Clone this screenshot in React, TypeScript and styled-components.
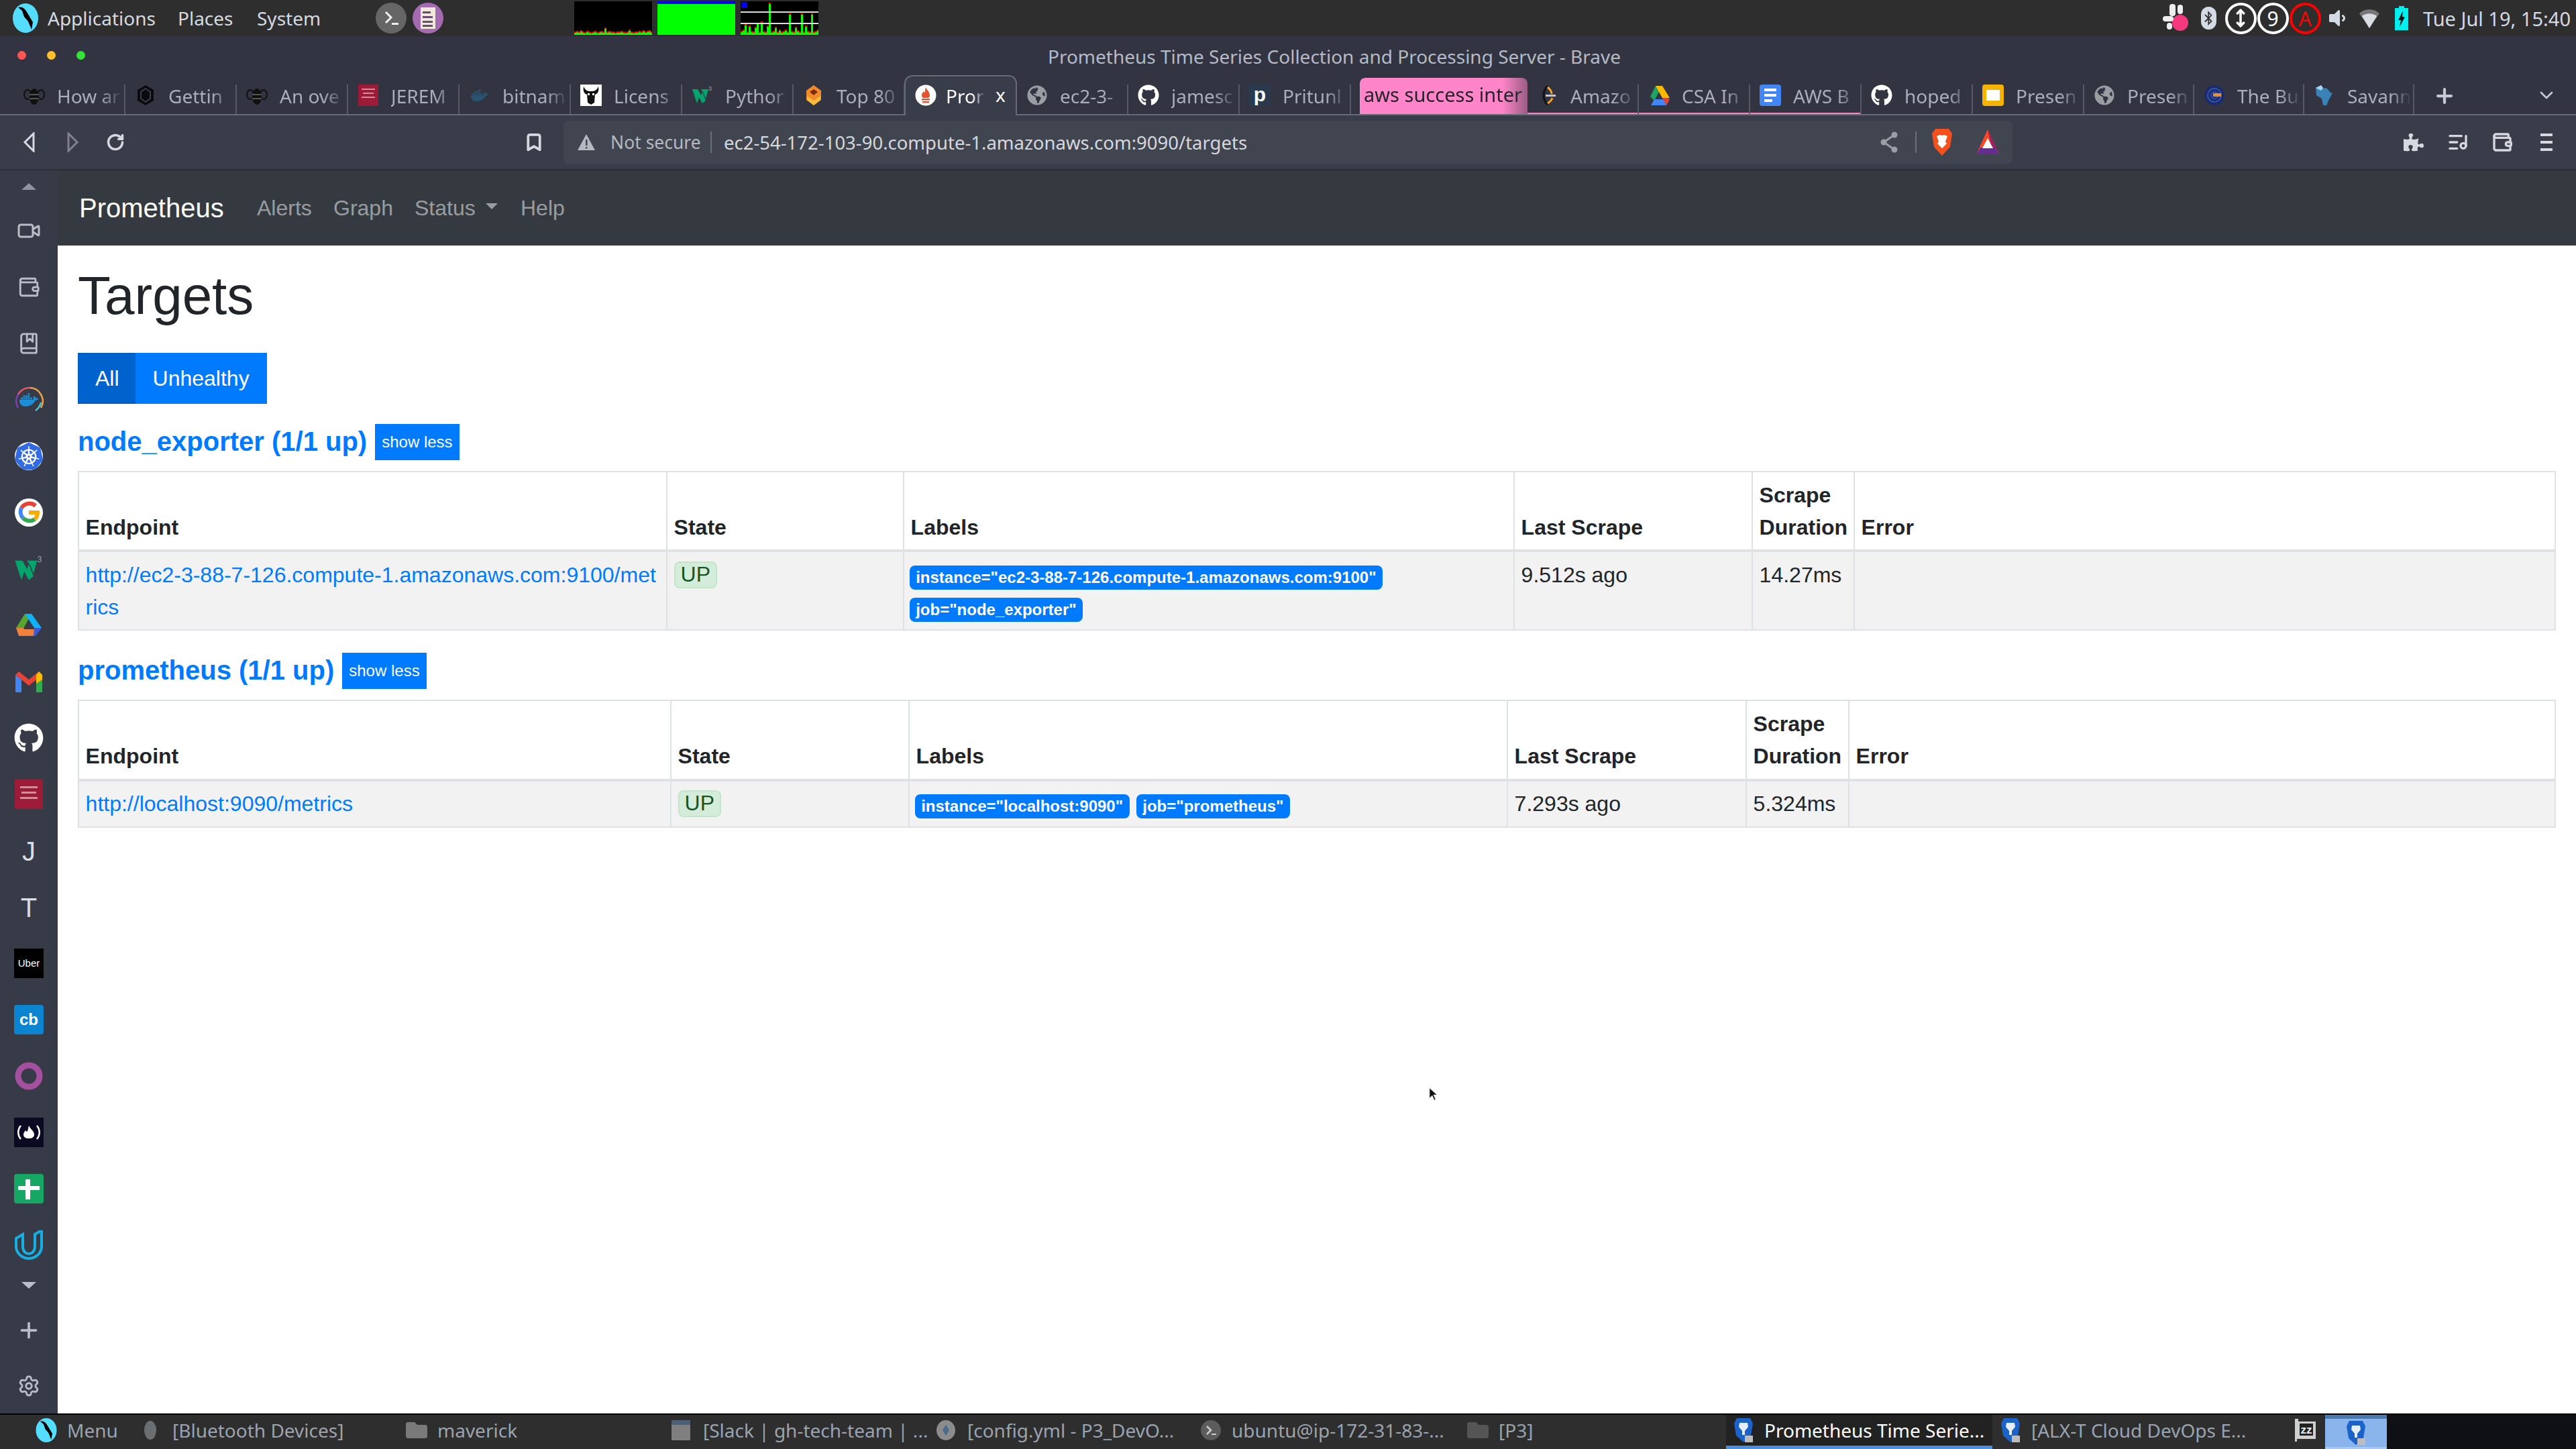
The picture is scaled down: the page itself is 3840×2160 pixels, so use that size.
import React from 'react'
import styled, { createGlobalStyle } from 'styled-components'
import { Video, Wallet, BookMarked, Settings, Plus, RotateCw, Bookmark, ListMusic, MoveVertical, ChevronDown } from 'lucide-react'
import { FaGithub, FaGlobeAmericas, FaPuzzlePiece, FaBluetoothB, FaVolumeDown, FaDocker, FaFolder } from 'react-icons/fa'
import { SiKubernetes } from 'react-icons/si'

const GlobalStyle = createGlobalStyle`
  html, body { margin: 0; padding: 0; background: #fff; }
  * { box-sizing: border-box; }
`

const Screen = styled.div`
  width: 3840px;
  height: 2160px;
  display: flex;
  flex-direction: column;
  overflow: hidden;
  font-family: "Noto Sans", sans-serif;
`

/* gnome panel */
const TopPanel = styled.div`
  height: 54px;
  flex: none;
  background: #2e2e2e;
  display: flex;
  align-items: center;
  padding-left: 16px;
  color: #d5dae2;
  font-size: 28px;
`
const PanelMenu = styled.div<{ $w: number; $ml?: number }>`
  width: ${p => p.$w}px;
  margin-left: ${p => p.$ml ?? 0}px;
  flex: none;
`
const Launcher = styled.div<{ $bg: string; $ml: number }>`
  width: 46px;
  height: 46px;
  border-radius: 50%;
  background: ${p => p.$bg};
  margin-left: ${p => p.$ml}px;
  display: flex;
  align-items: center;
  justify-content: center;
  flex: none;
`
const Graphs = styled.div`
  display: flex;
  gap: 8px;
  margin-left: 195px;
`
const Tray = styled.div`
  margin-left: auto;
  display: flex;
  align-items: center;
`
const TrayCell = styled.div`
  width: 48px;
  height: 54px;
  display: flex;
  align-items: center;
  justify-content: center;
`
const TrayCircle = styled.div<{ $c: string }>`
  width: 47px;
  height: 47px;
  border-radius: 50%;
  border: 4px solid ${p => p.$c};
  color: ${p => p.$c};
  display: flex;
  align-items: center;
  justify-content: center;
  font-size: 30px;
`
const BtPill = styled.div`
  width: 23px;
  height: 34px;
  border-radius: 12px;
  background: #d5dbe5;
  display: flex;
  align-items: center;
  justify-content: center;
`
const Clock = styled.div`
  width: 228px;
  margin-left: 8px;
  font-size: 29px;
  white-space: nowrap;
`

/* browser chrome */
const TitleBar = styled.div`
  height: 54px;
  flex: none;
  background: #323541;
  display: flex;
  align-items: center;
  justify-content: center;
  color: #b4bac6;
  font-size: 28px;
  padding: 6px 0 0 138px;
`
const Lights = styled.div`
  position: absolute;
  left: 26px;
  top: 76px;
  display: flex;
  gap: 31px;
`
const Light = styled.div<{ $c: string }>`
  width: 13px;
  height: 13px;
  border-radius: 50%;
  background: ${p => p.$c};
`
const TabStrip = styled.div`
  height: 64px;
  flex: none;
  background: #323541;
  border-bottom: 2px solid #666a72;
  display: flex;
  align-items: flex-end;
  padding-left: 21px;
  color: #a9aeb9;
  font-size: 28px;
`
const Tab = styled.div<{ $grouped?: boolean; $w?: number }>`
  width: ${p => p.$w ?? 166}px;
  height: 44px;
  flex: none;
  display: flex;
  gap: 18px;
  padding-left: 14px;
  border-right: 2px solid #555963;
  ${p => p.$grouped ? 'box-shadow: inset 0 -2px 0 #ff85c8;' : ''}
`
const ActiveTab = styled.div`
  width: 168px;
  height: 60px;
  flex: none;
  margin: 0 0 -2px -1px;
  background: #393c49;
  border: 2px solid #666a72;
  border-bottom: none;
  border-radius: 12px 12px 0 0;
  display: flex;
  gap: 14px;
  padding: 12px 0 0 14px;
  color: #fff;
`
const TabLabel = styled.div`
  flex: 1;
  min-width: 0;
  height: 40px;
  line-height: 34px;
  white-space: nowrap;
  -webkit-mask-image: linear-gradient(to right, #000 65%, transparent 98%);
`
const TabClose = styled.div`
  width: 30px;
  font-size: 28px;
  line-height: 30px;
`
const Favicon = styled.div`
  width: 32px;
  height: 32px;
  flex: none;
  display: flex;
  align-items: center;
  justify-content: center;
`
const GroupChip = styled.div`
  width: 250px;
  height: 54px;
  flex: none;
  margin-left: 13px;
  background: #ff85c8;
  border-radius: 8px 8px 0 0;
  color: #23242c;
  font-size: 29px;
  line-height: 50px;
  padding-left: 6px;
  white-space: nowrap;
  -webkit-mask-image: linear-gradient(to right, #000 85%, rgba(0, 0, 0, .5) 100%);
`
const NewTab = styled.div`
  width: 90px;
  height: 44px;
  display: flex;
  justify-content: center;
  align-items: flex-start;
  color: #c5c9d2;
`
const TabMenu = styled.div`
  margin-left: 91px;
  height: 44px;
  color: #c5c9d2;
`
const Toolbar = styled.div`
  height: 82px;
  flex: none;
  background: #393c49;
  border-bottom: 2px solid #2b2e38;
  display: flex;
  align-items: center;
  padding: 0 11px 0 12px;
  color: #d5d8de;
`
const ToolCell = styled.div<{ $w?: number; $ml?: number; $dim?: boolean }>`
  width: ${p => p.$w ?? 64}px;
  height: 64px;
  flex: none;
  margin-left: ${p => p.$ml ?? 0}px;
  display: flex;
  align-items: center;
  justify-content: center;
  opacity: ${p => p.$dim ? 0.45 : 1};
`
const AddressBar = styled.div`
  width: 2160px;
  height: 64px;
  flex: none;
  margin-left: 12px;
  background: #414550;
  border-radius: 8px;
  display: flex;
  align-items: center;
  font-size: 27px;
  padding-left: 20px;
`
const NotSecure = styled.div`
  width: 149px;
  margin-left: 22px;
  color: #b4b8c0;
  font-size: 26.5px;
  white-space: nowrap;
`
const AddressSep = styled.div<{ $ml?: number }>`
  width: 2px;
  height: 32px;
  background: #6b6f79;
  margin-left: ${p => p.$ml ?? 0}px;
  flex: none;
`
const Url = styled.div`
  width: 1723px;
  margin-left: 18px;
  color: #d5d8de;
  font-size: 27.5px;
  white-space: nowrap;
`
const ToolRight = styled.div`
  margin-left: auto;
  display: flex;
`

/* page area */
const Body = styled.div`
  flex: 1;
  min-height: 0;
  display: flex;
`
const Rail = styled.div`
  width: 86px;
  flex: none;
  background: #373a47;
  display: flex;
  flex-direction: column;
  align-items: center;
`
const RailSlot = styled.div<{ $h?: number }>`
  height: ${p => p.$h ?? 84}px;
  width: 44px;
  flex: none;
  display: flex;
  align-items: center;
  justify-content: center;
  color: #b9bdc7;
`
const Page = styled.div`
  flex: 1;
  min-width: 0;
  position: relative;
  background: #fff;
  font-family: "Liberation Sans", Arial, sans-serif;
  font-size: 32px;
  line-height: 48px;
  color: #212529;
`
const Navbar = styled.div`
  height: 112px;
  background: #343a40;
  display: flex;
  align-items: center;
  padding-left: 32px;
`
const Brand = styled.div`
  font-size: 40px;
  color: #fff;
  width: 265px;
  padding-bottom: 1px;
`
const NavLink = styled.div<{ $w: number }>`
  width: ${p => p.$w}px;
  color: rgba(255, 255, 255, .5);
  display: flex;
  align-items: center;
  flex: none;
`
const Caret = styled.span`
  width: 0;
  height: 0;
  margin: 0 0 5px 15px;
  border-top: 9.6px solid rgba(255, 255, 255, .5);
  border-left: 9.6px solid transparent;
  border-right: 9.6px solid transparent;
`
const Container = styled.div`
  padding: 27px 30px 0;
`
const Title = styled.h1`
  margin: 0 0 37px;
  font-size: 80px;
  font-weight: 500;
  line-height: 96px;
`
const FilterGroup = styled.div`
  display: flex;
  margin-bottom: 30px;
`
const FilterButton = styled.div<{ $active?: boolean }>`
  height: 76px;
  padding: 12px 24px;
  margin-left: ${p => p.$active ? 0 : -2}px;
  border: 2px solid ${p => p.$active ? '#005cbf' : '#007bff'};
  background: ${p => p.$active ? '#0062cc' : '#007bff'};
  color: #fff;
`
const JobHeading = styled.div`
  height: 54px;
  margin-bottom: 16px;
  display: flex;
  align-items: center;
  gap: 12px;
`
const JobLink = styled.h5`
  margin: 0;
  padding-bottom: 3px;
  font-size: 40px;
  font-weight: 700;
  line-height: 48px;
  color: #007bff;
`
const ShowLess = styled.div`
  height: 54px;
  padding: 7px 8px;
  border: 2px solid #007bff;
  background: #007bff;
  color: #fff;
  font-size: 24px;
  line-height: 36px;
`
const Table = styled.table`
  width: 100%;
  table-layout: fixed;
  border-collapse: collapse;
  margin-bottom: 33px;
`
const Col = styled.col<{ $w?: number }>`
  ${p => p.$w ? `width: ${p.$w}px;` : ''}
`
const Th = styled.th`
  border: 2px solid #dee2e6;
  border-bottom-width: 4px;
  padding: 9.6px;
  text-align: left;
  vertical-align: bottom;
  font-weight: 700;
`
const Td = styled.td`
  border: 2px solid #dee2e6;
  padding: 9.6px;
  vertical-align: top;
  background: #f2f2f2;
`
const EndpointLink = styled.a`
  color: #007bff;
  word-break: break-all;
`
const UpBadge = styled.div`
  display: inline-block;
  height: 40px;
  padding: 0 8px;
  margin-top: 4px;
  background: #d4edda;
  border: 2px solid #c3e6cb;
  border-radius: 8px;
  color: #155724;
  line-height: 34px;
  vertical-align: top;
`
const LabelRow = styled.div`
  display: flex;
  flex-wrap: wrap;
  gap: 12px 10px;
  padding: 10px 0 2px;
  margin-left: -2px;
`
const Label = styled.span`
  height: 36px;
  padding: 6px 9.6px;
  background: #007bff;
  border-radius: 8px;
  color: #fff;
  font-size: 24px;
  font-weight: 700;
  line-height: 24px;
  white-space: nowrap;
`
const Pointer = styled.svg`
  position: absolute;
  left: 2044px;
  top: 1367px;
`

/* bottom panel */
const BottomPanel = styled.div`
  height: 53px;
  flex: none;
  background: #2e2e2e;
  border-top: 2px solid #000;
  display: flex;
  align-items: stretch;
  padding-left: 51px;
  color: #9aa4af;
  font-size: 28px;
`
const TaskItem = styled.div<{ $w: number; $active?: boolean; $pl?: number }>`
  width: ${p => p.$w}px;
  flex: none;
  display: flex;
  align-items: center;
  padding-left: ${p => p.$pl ?? 0}px;
  background: ${p => p.$active ? '#222222' : 'transparent'};
  color: ${p => p.$active ? '#fff' : 'inherit'};
  border-bottom: 5px solid ${p => p.$active ? '#4a8fdf' : 'transparent'};
  white-space: nowrap;
`
const TaskIcon = styled.div<{ $w?: number }>`
  width: ${p => p.$w ?? 47}px;
  flex: none;
  display: flex;
`
const Workspace = styled.div`
  width: 92px;
  flex: none;
  background: #8ab4ec;
  border-top: 6px solid #4a78b0;
  border-bottom: 3px solid #a9c8f2;
  display: flex;
  align-items: center;
  justify-content: center;
`
const WorkspaceRest = styled.div`
  flex: 1;
  background: #0f1013;
`

const Bird = ({ size = 44 }: { size?: number }) => (
  <svg width={size} height={size} viewBox="0 0 44 44">
    <ellipse cx="22" cy="22" rx="19" ry="22" fill="#55ddff" />
    <path d="M11 6c6-2 10 2 13 7l9 15-2 11-5-12-6-7-3-9z" fill="#000" />
  </svg>
)

const BraveBlue = ({ size = 32 }: { size?: number }) => (
  <svg width={size} height={size + 8} viewBox="0 0 32 40">
    <path d="M6 2h20l4 8-3 18-11 10L5 28 2 10z" fill="#1c63c9" />
    <path d="M10 9h12l1 6-5 6v6h-4v-6l-5-6z" fill="#e6eefb" />
    <rect x="18" y="28" width="12" height="10" fill="#bdbdbd" />
  </svg>
)

const W3Logo = ({ size = 32 }: { size?: number }) => (
  <svg width={size} height={size} viewBox="0 0 32 32">
    <path d="M1 7h8l5 9 2-5 5 13-5 4-5-9-3 9z" fill="#04a56c" />
    <path d="M14 7h11l-4 14-3-8z" fill="#04a56c" />
    <text x="25" y="9" fontSize="9" fill="#9aa3a0" fontFamily="Liberation Sans">3</text>
  </svg>
)

const MiniGraph = ({ bars, bg, lines }: { bars: number[]; bg: string; lines?: boolean }) => (
  <svg width="116" height="50" viewBox="0 0 116 50">
    <rect width="116" height="50" fill={bg} />
    {bars.map((h, i) => (
      <g key={i}>
        <rect x={i * 3} y={50 - h} width="3" height={h} fill="#00ff00" />
        <rect x={i * 3} y={50 - h - 2} width="3" height="2" fill="#ff0000" />
      </g>
    ))}
    {lines && <rect y="15" width="116" height="2" fill="#ddd" />}
    {lines && <rect y="32" width="116" height="2" fill="#ddd" />}
    {lines && <rect x="1" y="1" width="9" height="9" fill="#0000ff" />}
  </svg>
)

const cpuBars = [3, 4, 3, 5, 3, 2, 4, 3, 2, 3, 4, 2, 3, 4, 3, 9, 3, 4, 3, 3, 2, 3, 3, 4, 3, 2, 3, 6, 3, 2, 3, 3, 4, 3, 5, 3, 4, 5, 3]
const netBars = [4, 6, 14, 3, 12, 4, 3, 10, 16, 3, 18, 4, 3, 12, 46, 3, 4, 10, 3, 6, 3, 4, 6, 3, 30, 4, 3, 10, 5, 3, 30, 3, 12, 4, 3, 30, 3, 4, 6]

const favicons: Record<string, React.ReactNode> = {
  bee: (
    <svg width="32" height="32" viewBox="0 0 32 32">
      <ellipse cx="16" cy="18" rx="7" ry="12" fill="#111" />
      <ellipse cx="6" cy="15" rx="5" ry="7" fill="none" stroke="#111" strokeWidth="2" />
      <ellipse cx="26" cy="15" rx="5" ry="7" fill="none" stroke="#111" strokeWidth="2" />
      <rect x="9" y="14" width="14" height="2" fill="#555" />
      <rect x="9" y="20" width="14" height="2" fill="#555" />
    </svg>
  ),
  hex: (
    <svg width="32" height="32" viewBox="0 0 32 32">
      <path d="M16 1l12 7v16l-12 7-12-7V8z" fill="#0b0b0f" />
      <path d="M16 6l7 5v10l-7 5-7-5V11z" fill="none" stroke="#3a3d4a" strokeWidth="2" />
    </svg>
  ),
  book: (
    <svg width="32" height="32" viewBox="0 0 32 32">
      <rect x="1" width="30" height="32" fill="#9c1c38" />
      <rect x="6" y="6" width="20" height="2" fill="#d98a96" />
      <rect x="8" y="12" width="16" height="2" fill="#d98a96" />
      <rect x="6" y="18" width="20" height="2" fill="#d98a96" />
    </svg>
  ),
  dock: <FaDocker size={26} color="#2b5270" />,
  gnu: (
    <svg width="32" height="32" viewBox="0 0 32 32">
      <rect width="32" height="32" fill="#fff" />
      <path d="M5 3c3 6 5 7 11 7s8-1 11-7c1 6 0 10-5 12l-1 12-5 3-5-3-1-12C5 13 4 9 5 3z" fill="#111" />
      <rect x="11" y="13" width="3" height="3" fill="#fff" />
      <rect x="18" y="13" width="3" height="3" fill="#fff" />
    </svg>
  ),
  w3: <W3Logo />,
  top: (
    <svg width="32" height="32" viewBox="0 0 32 32">
      <path d="M16 1l11 8v14l-11 8-11-8V9z" fill="#f28a2c" />
      <path d="M16 7l6 4-6 5-6-5z" fill="#7a2d10" />
      <path d="M6 17l10 7 10-7v6l-10 8-10-8z" fill="#f6bd3a" />
    </svg>
  ),
  prom: (
    <svg width="32" height="32" viewBox="0 0 32 32">
      <circle cx="16" cy="16" r="15.5" fill="#fff" />
      <path d="M16 4c1 4 6 6 6 12 0 2-1 3-2 4H12c-1-1-2-2-2-4 0-3 2-4 3-6 1 2 2 2 2 1 0-2 0-4 1-7z" fill="#e6522c" />
      <rect x="10" y="21" width="12" height="2.4" fill="#e6522c" />
      <rect x="11" y="25" width="10" height="2.4" fill="#e6522c" />
    </svg>
  ),
  globe: <FaGlobeAmericas size={30} color="#9a9ea3" />,
  github: <FaGithub size={32} color="#fff" />,
  pritunl: (
    <svg width="32" height="32" viewBox="0 0 32 32">
      <rect width="32" height="32" fill="#2a3a4e" />
      <text x="16" y="25" textAnchor="middle" fontSize="30" fontWeight="700" fill="#fff" fontFamily="Liberation Sans">p</text>
    </svg>
  ),
  amazon: (
    <svg width="32" height="32" viewBox="0 0 32 32">
      <path d="M16 2C8 10 8 22 16 30" fill="none" stroke="#111" strokeWidth="3" />
      <path d="M16 4c5 4 6 7 6 10M16 28c5-3 6-5 7-8" fill="none" stroke="#f5a623" strokeWidth="3" />
      <rect x="13" y="15" width="15" height="3" fill="#c9c9c9" />
    </svg>
  ),
  drive: (
    <svg width="32" height="32" viewBox="0 0 32 32">
      <path d="M11 2h10L9 24 3 18z" fill="#1ea362" />
      <path d="M11 2h10l11 18H21z" fill="#ffba00" />
      <path d="M9 22h23l-5 9H4z" fill="#4285f4" />
      <path d="M21 20h8l3 2-5 9z" fill="#db4437" />
    </svg>
  ),
  docs: (
    <svg width="32" height="32" viewBox="0 0 32 32">
      <rect width="32" height="32" rx="4" fill="#4285f4" />
      <rect x="7" y="6" width="18" height="4" fill="#fff" />
      <rect x="7" y="14" width="18" height="4" fill="#fff" />
      <rect x="7" y="22" width="12" height="4" fill="#fff" />
    </svg>
  ),
  slides: (
    <svg width="32" height="32" viewBox="0 0 32 32">
      <rect width="32" height="32" rx="4" fill="#f4b400" />
      <rect x="6" y="8" width="20" height="16" fill="#fff" />
    </svg>
  ),
  bucket: (
    <svg width="32" height="32" viewBox="0 0 32 32">
      <circle cx="16" cy="16" r="15" fill="#1c2b6b" />
      <circle cx="16" cy="16" r="10" fill="none" stroke="#3450a8" strokeWidth="2" />
      <circle cx="16" cy="16" r="5" fill="none" stroke="#3450a8" strokeWidth="2" />
      <rect x="14" y="13" width="12" height="5" fill="#e8912d" />
    </svg>
  ),
  savannah: (
    <svg width="32" height="32" viewBox="0 0 32 32">
      <path d="M3 5l8-4 3 4 6 1 5 6 3 1-5 9-4 9h-5l-2-10-8-5z" fill="#3b82b8" />
      <path d="M3 5l8-4 3 4-3 4z" fill="#a8d4ee" />
    </svg>
  ),
}

const leftTabs = [
  ['bee', 'How ar'], ['hex', 'Gettin'], ['bee', 'An ove'], ['book', 'JEREM'],
  ['dock', 'bitnam'], ['gnu', 'Licens'], ['w3', 'Pythor'], ['top', 'Top 80'],
]
const midTabs = [['globe', 'ec2-3-'], ['github', 'jamesc'], ['pritunl', 'Pritunl']]
const groupedTabs = [['amazon', 'Amazo'], ['drive', 'CSA In'], ['docs', 'AWS B']]
const rightTabs = [['github', 'hoped'], ['slides', 'Presen']]
const narrowTabs = [['globe', 'Presen'], ['bucket', 'The Bu'], ['savannah', 'Savann']]

const railIcons: React.ReactNode[] = [
  <Video key="v" size={36} strokeWidth={2} />,
  <Wallet key="w" size={34} strokeWidth={2} />,
  <BookMarked key="b" size={34} strokeWidth={2} />,
  <svg key="d" width="44" height="44" viewBox="0 0 44 44">
    <path d="M6 34a20 20 0 0 1 18-30" fill="none" stroke="#7b3fb5" strokeWidth="2.5" />
    <path d="M24 4a20 20 0 0 1 16 30" fill="none" stroke="#f0a24a" strokeWidth="2.5" />
    <path d="M6 14a20 20 0 0 1 18-10" fill="none" stroke="#ee5560" strokeWidth="2.5" />
    <path d="M40 26a20 20 0 0 1-8 12" fill="none" stroke="#3fd0d8" strokeWidth="2.5" />
    <foreignObject x="8" y="8" width="28" height="28"><FaDocker size={28} color="#1d8fd8" /></foreignObject>
  </svg>,
  <SiKubernetes key="k" size={42} color="#326ce5" style={{ background: '#fff', borderRadius: '50%' }} />,
  <svg key="g" width="44" height="44" viewBox="0 0 44 44">
    <circle cx="22" cy="22" r="21" fill="#fff" />
    <path d="M32 12a14 14 0 0 0-21 3" fill="none" stroke="#ea4335" strokeWidth="6" />
    <path d="M11 15a14 14 0 0 0 2 15" fill="none" stroke="#4285f4" strokeWidth="6" />
    <path d="M13 30a14 14 0 0 0 18 2" fill="none" stroke="#34a853" strokeWidth="6" />
    <path d="M31 32c3-3 4-6 4-10H22" fill="none" stroke="#f9ab00" strokeWidth="6" />
  </svg>,
  <W3Logo key="w3" size={44} />,
  <svg key="dr" width="40" height="36" viewBox="0 0 40 36">
    <path d="M14 1h10L10 26l-9-4z" fill="#57a72f" />
    <path d="M14 1h10l15 21H28z" fill="#0fb2f4" />
    <path d="M1 22h12l-3 12H5z" fill="#f0813a" />
    <path d="M10 24h20l-3 10H10z" fill="#f0813a" />
    <path d="M28 22h11l-9 12h-3z" fill="#3b5bdb" />
  </svg>,
  <svg key="m" width="40" height="32" viewBox="0 0 40 32">
    <path d="M0 6v26h9V13z" fill="#4285f4" />
    <path d="M31 13v19h9V6z" fill="#34a853" />
    <path d="M0 6l5-5 15 12L35 1l5 5-20 16z" fill="#ea4335" />
    <path d="M31 6l4-5 5 5v7l-9 6z" fill="#fbbc04" />
  </svg>,
  <FaGithub key="gh" size={44} color="#fff" />,
  <svg key="kj" width="42" height="44" viewBox="0 0 42 44">
    <rect width="42" height="44" fill="#9c1c38" />
    <rect x="8" y="10" width="26" height="3" fill="#d98a96" />
    <rect x="10" y="18" width="22" height="3" fill="#d98a96" />
    <rect x="8" y="26" width="26" height="3" fill="#d98a96" />
  </svg>,
  <svg key="j" width="44" height="44" viewBox="0 0 44 44"><text x="22" y="37" textAnchor="middle" fontSize="40" fill="#d9dce3" fontFamily="Liberation Sans">J</text></svg>,
  <svg key="t" width="44" height="44" viewBox="0 0 44 44"><text x="22" y="37" textAnchor="middle" fontSize="40" fill="#d9dce3" fontFamily="Liberation Sans">T</text></svg>,
  <svg key="u" width="44" height="44" viewBox="0 0 44 44">
    <rect width="44" height="44" fill="#000" />
    <text x="22" y="27" textAnchor="middle" fontSize="15" fill="#fff" fontFamily="Liberation Sans">Uber</text>
  </svg>,
  <svg key="c" width="44" height="44" viewBox="0 0 44 44">
    <rect width="44" height="44" rx="4" fill="#0d84d0" />
    <text x="22" y="30" textAnchor="middle" fontSize="24" fontWeight="700" fill="#fff" fontFamily="Liberation Sans">cb</text>
  </svg>,
  <svg key="o" width="44" height="44" viewBox="0 0 44 44"><circle cx="22" cy="22" r="16" fill="none" stroke="#a5509f" strokeWidth="9" /></svg>,
  <svg key="f" width="44" height="44" viewBox="0 0 44 44">
    <rect width="44" height="44" fill="#0a0a23" />
    <path d="M10 12c-5 6-5 14 0 20M34 12c5 6 5 14 0 20" fill="none" stroke="#fff" strokeWidth="2.5" />
    <path d="M22 12c2 5 8 8 8 13 0 4-3 6-8 6s-8-2-8-6c0-3 2-4 3-6 1 2 2 2 3 1 1-2 1-5 2-8z" fill="#fff" />
  </svg>,
  <svg key="s" width="44" height="44" viewBox="0 0 44 44">
    <rect width="44" height="44" rx="4" fill="#16a765" />
    <rect x="6" y="18" width="32" height="6" fill="#fff" />
    <rect x="17" y="8" width="7" height="30" fill="#fff" />
  </svg>,
  <svg key="ud" width="44" height="44" viewBox="0 0 44 44">
    <path d="M3 12l10-6v18c0 8 5 11 9 11s9-3 9-11V6l10-6v24c0 10-9 18-19 18S3 34 3 24z" fill="none" stroke="#17aee2" strokeWidth="4" />
  </svg>,
]

type Row = { endpoint: string; labels: string[]; last: string; duration: string }
const jobs: { name: string; cols: number[]; row: Row }[] = [
  {
    name: 'node_exporter (1/1 up)',
    cols: [877, 353, 910, 355, 152],
    row: {
      endpoint: 'http://ec2-3-88-7-126.compute-1.amazonaws.com:9100/metrics',
      labels: ['instance="ec2-3-88-7-126.compute-1.amazonaws.com:9100"', 'job="node_exporter"'],
      last: '9.512s ago',
      duration: '14.27ms',
    },
  },
  {
    name: 'prometheus (1/1 up)',
    cols: [883, 355, 892, 356, 153],
    row: {
      endpoint: 'http://localhost:9090/metrics',
      labels: ['instance="localhost:9090"', 'job="prometheus"'],
      last: '7.293s ago',
      duration: '5.324ms',
    },
  },
]

const renderTab = ([icon, text]: string[], grouped?: boolean, width?: number) => (
  <Tab key={icon + text} $grouped={grouped} $w={width}>
    <Favicon>{favicons[icon]}</Favicon>
    <TabLabel>{text}</TabLabel>
  </Tab>
)

const App = () => {
  return (
    <Screen>
      <GlobalStyle />
      <TopPanel>
        <Bird />
        <PanelMenu $w={194} $ml={11}>Applications</PanelMenu>
        <PanelMenu $w={118}>Places</PanelMenu>
        <PanelMenu $w={177}>System</PanelMenu>
        <Launcher $bg="#666666" $ml={0}>
          <svg width="26" height="26" viewBox="0 0 26 26">
            <path d="M5 4l8 8-8 8" fill="none" stroke="#eee" strokeWidth="3" />
            <rect x="14" y="20" width="10" height="3" fill="#eee" />
          </svg>
        </Launcher>
        <Launcher $bg="#a56bb0" $ml={9}>
          <svg width="24" height="32" viewBox="0 0 24 32">
            <rect x="1" width="22" height="32" fill="#efe9dc" />
            <rect x="4" y="6" width="12" height="3" fill="#6b4a70" />
            <rect x="4" y="13" width="15" height="3" fill="#6b4a70" />
            <rect x="4" y="20" width="15" height="3" fill="#6b4a70" />
            <rect x="4" y="26" width="15" height="3" fill="#6b4a70" />
          </svg>
        </Launcher>
        <Graphs>
          <MiniGraph bars={cpuBars} bg="#000" />
          <svg width="116" height="50" viewBox="0 0 116 50">
            <rect width="116" height="50" fill="#00ff00" />
            <rect width="116" height="4" fill="#0000ff" />
          </svg>
          <MiniGraph bars={netBars} bg="#000" lines />
        </Graphs>
        <Tray>
          <TrayCell>
            <svg width="40" height="46" viewBox="0 0 40 46">
              <circle cx="26" cy="30" r="12" fill="#f5397f" />
              <rect x="10" y="2" width="9" height="18" rx="4" fill="#eee" />
              <rect x="0" y="20" width="16" height="8" rx="4" fill="#eee" />
              <rect x="22" y="3" width="8" height="14" rx="4" fill="#eee" />
              <rect x="6" y="30" width="8" height="10" rx="4" fill="#eee" />
            </svg>
          </TrayCell>
          <TrayCell><BtPill><FaBluetoothB size={22} color="#333" /></BtPill></TrayCell>
          <TrayCell><TrayCircle $c="#ffffff"><MoveVertical size={28} strokeWidth={3} /></TrayCircle></TrayCell>
          <TrayCell><TrayCircle $c="#ffffff">9</TrayCircle></TrayCell>
          <TrayCell><TrayCircle $c="#ff0000">A</TrayCircle></TrayCell>
          <TrayCell><FaVolumeDown size={32} color="#d5dbe5" /></TrayCell>
          <TrayCell>
            <svg width="32" height="30" viewBox="0 0 32 30">
              <path d="M1 8c8-8 22-8 30 0L16 30z" fill="#777" />
              <path d="M5 12c6-5 16-5 22 0L16 30z" fill="#d9dde4" />
            </svg>
          </TrayCell>
          <TrayCell>
            <svg width="20" height="36" viewBox="0 0 20 36">
              <rect x="6" width="8" height="4" fill="#00eeee" />
              <rect y="3" width="20" height="33" fill="#00eeee" />
              <path d="M12 7L5 21h4l-2 10 8-15h-4z" fill="#111" />
            </svg>
          </TrayCell>
          <Clock>Tue Jul 19, 15:40</Clock>
        </Tray>
      </TopPanel>

      <TitleBar>Prometheus Time Series Collection and Processing Server - Brave</TitleBar>
      <Lights>
        <Light $c="#ff5555" />
        <Light $c="#ffc02e" />
        <Light $c="#36e23a" />
      </Lights>

      <TabStrip>
        {leftTabs.map(t => renderTab(t))}
        <ActiveTab>
          <Favicon>{favicons.prom}</Favicon>
          <TabLabel>Pror</TabLabel>
          <TabClose>x</TabClose>
        </ActiveTab>
        {midTabs.map(t => renderTab(t))}
        <GroupChip>aws success inter</GroupChip>
        {groupedTabs.map(t => renderTab(t, true))}
        {rightTabs.map(t => renderTab(t))}
        {narrowTabs.map(t => renderTab(t, false, 164))}
        <NewTab><Plus size={34} strokeWidth={3} /></NewTab>
        <TabMenu><ChevronDown size={32} strokeWidth={2} /></TabMenu>
      </TabStrip>

      <Toolbar>
        <ToolCell>
          <svg width="22" height="30" viewBox="0 0 22 30"><path d="M17 2L4 15l13 13z" fill="none" stroke="#d5d8de" strokeWidth="3" /></svg>
        </ToolCell>
        <ToolCell $dim>
          <svg width="22" height="30" viewBox="0 0 22 30"><path d="M5 2l13 13L5 28z" fill="none" stroke="#d5d8de" strokeWidth="3" /></svg>
        </ToolCell>
        <ToolCell><RotateCw size={28} strokeWidth={3} /></ToolCell>
        <ToolCell $ml={560}><Bookmark size={30} strokeWidth={3} /></ToolCell>
        <AddressBar>
          <svg width="28" height="26" viewBox="0 0 28 26">
            <path d="M14 1l13 24H1z" fill="#b4b8c0" />
            <rect x="13" y="9" width="2.5" height="9" fill="#414550" />
            <rect x="13" y="20" width="2.5" height="2.5" fill="#414550" />
          </svg>
          <NotSecure>Not secure</NotSecure>
          <AddressSep />
          <Url>ec2-54-172-103-90.compute-1.amazonaws.com:9090/targets</Url>
          <svg width="28" height="32" viewBox="0 0 28 32">
            <path d="M22 5L6 16l16 11" fill="none" stroke="#9a9ea6" strokeWidth="3" />
            <circle cx="22" cy="5" r="4.5" fill="#9a9ea6" />
            <circle cx="6" cy="16" r="4.5" fill="#9a9ea6" />
            <circle cx="22" cy="27" r="4.5" fill="#9a9ea6" />
          </svg>
          <AddressSep $ml={25} />
          <ToolCell $w={76}>
            <svg width="32" height="42" viewBox="0 0 32 42">
              <path d="M6 1h20l5 7-3 20-12 13L4 28 1 8z" fill="#f4511e" />
              <path d="M8 12l5-2 3 1 3-1 5 2-3 8 2 3-7 7-7-7 2-3z" fill="#fff" />
            </svg>
          </ToolCell>
          <ToolCell $w={60}>
            <svg width="36" height="40" viewBox="0 0 36 40">
              <path d="M18 1L1 38h34z" fill="#ff4724" />
              <path d="M18 1l17 37H26z" fill="#9e1f63" />
              <path d="M1 38h34l-6-10H7z" fill="#662d91" />
              <path d="M18 14l8 15H10z" fill="#fff" />
            </svg>
          </ToolCell>
        </AddressBar>
        <ToolRight>
          <ToolCell $w={66}><FaPuzzlePiece size={30} color="#d5d8de" /></ToolCell>
          <ToolCell $w={66}><ListMusic size={32} strokeWidth={2.5} /></ToolCell>
          <ToolCell $w={66}><Wallet size={32} strokeWidth={2.5} /></ToolCell>
          <ToolCell $w={66}>
            <svg width="20" height="28" viewBox="0 0 20 28">
              <rect x="1" y="1" width="18" height="4" fill="#d5d8de" />
              <rect x="1" y="12" width="18" height="4" fill="#d5d8de" />
              <rect x="1" y="23" width="18" height="4" fill="#d5d8de" />
            </svg>
          </ToolCell>
        </ToolRight>
      </Toolbar>

      <Body>
        <Rail>
          <RailSlot $h={48}>
            <svg width="24" height="12" viewBox="0 0 24 12"><path d="M12 1l11 10H1z" fill="#8f93a0" /></svg>
          </RailSlot>
          {railIcons.map((icon, i) => <RailSlot key={i}>{icon}</RailSlot>)}
          <RailSlot $h={36}>
            <svg width="24" height="12" viewBox="0 0 24 12"><path d="M12 11L23 1H1z" fill="#b9bdc7" /></svg>
          </RailSlot>
          <RailSlot $h={98}><Plus size={36} strokeWidth={2.5} /></RailSlot>
          <RailSlot $h={68}><Settings size={34} strokeWidth={2} /></RailSlot>
        </Rail>

        <Page>
          <Navbar>
            <Brand>Prometheus</Brand>
            <NavLink $w={114}>Alerts</NavLink>
            <NavLink $w={121}>Graph</NavLink>
            <NavLink $w={158}>Status<Caret /></NavLink>
            <NavLink $w={80}>Help</NavLink>
          </Navbar>
          <Container>
            <Title>Targets</Title>
            <FilterGroup>
              <FilterButton $active>All</FilterButton>
              <FilterButton>Unhealthy</FilterButton>
            </FilterGroup>
            {jobs.map(job => (
              <div key={job.name}>
                <JobHeading>
                  <JobLink>{job.name}</JobLink>
                  <ShowLess>show less</ShowLess>
                </JobHeading>
                <Table>
                  <colgroup>
                    {job.cols.map((w, i) => <Col key={i} $w={w} />)}
                    <Col />
                  </colgroup>
                  <thead>
                    <tr>
                      <Th>Endpoint</Th>
                      <Th>State</Th>
                      <Th>Labels</Th>
                      <Th>Last Scrape</Th>
                      <Th>Scrape Duration</Th>
                      <Th>Error</Th>
                    </tr>
                  </thead>
                  <tbody>
                    <tr>
                      <Td><EndpointLink>{job.row.endpoint}</EndpointLink></Td>
                      <Td><UpBadge>UP</UpBadge></Td>
                      <Td>
                        <LabelRow>
                          {job.row.labels.map(l => <Label key={l}>{l}</Label>)}
                        </LabelRow>
                      </Td>
                      <Td>{job.row.last}</Td>
                      <Td>{job.row.duration}</Td>
                      <Td />
                    </tr>
                  </tbody>
                </Table>
              </div>
            ))}
          </Container>
          <Pointer width="14" height="20" viewBox="0 0 14 20">
            <path d="M1 1v15l4-4 3 7 2-1-3-7h5z" fill="#111" stroke="#ddd" strokeWidth="0.6" />
          </Pointer>
        </Page>
      </Body>

      <BottomPanel>
        <TaskItem $w={163}><TaskIcon $w={49}><Bird size={36} /></TaskIcon>Menu</TaskItem>
        <TaskItem $w={391}>
          <TaskIcon $w={43}>
            <svg width="20" height="32" viewBox="0 0 20 32"><ellipse cx="10" cy="16" rx="9" ry="14" fill="#6b6f72" /></svg>
          </TaskIcon>
          [Bluetooth Devices]
        </TaskItem>
        <TaskItem $w={396}><TaskIcon><FaFolder size={32} color="#7a7a7a" /></TaskIcon>maverick</TaskItem>
        <TaskItem $w={394}>
          <TaskIcon>
            <svg width="28" height="30" viewBox="0 0 28 30">
              <rect width="28" height="30" fill="#7f7f7f" />
              <rect width="28" height="7" fill="#4a5f7a" />
            </svg>
          </TaskIcon>
          [Slack | gh-tech-team | ...
        </TaskItem>
        <TaskItem $w={394}>
          <TaskIcon>
            <svg width="30" height="32" viewBox="0 0 30 32">
              <ellipse cx="15" cy="16" rx="14" ry="15" fill="#8c8c8c" />
              <path d="M15 8l5 8-5 8-5-8z" fill="#4a6c8c" />
            </svg>
          </TaskIcon>
          [config.yml - P3_DevO...
        </TaskItem>
        <TaskItem $w={398}>
          <TaskIcon>
            <svg width="32" height="32" viewBox="0 0 32 32">
              <circle cx="16" cy="16" r="15" fill="#5c5c5c" />
              <path d="M10 10l6 6-6 6" fill="none" stroke="#ccc" strokeWidth="2.5" />
              <rect x="17" y="21" width="7" height="2" fill="#ccc" />
            </svg>
          </TaskIcon>
          ubuntu@ip-172-31-83-...
        </TaskItem>
        <TaskItem $w={386}><TaskIcon><FaFolder size={32} color="#555" /></TaskIcon>[P3]</TaskItem>
        <TaskItem $w={397} $active $pl={10}><TaskIcon><BraveBlue /></TaskIcon>Prometheus Time Serie...</TaskItem>
        <TaskItem $w={450} $pl={11}><TaskIcon><BraveBlue /></TaskIcon>[ALX-T Cloud DevOps E...</TaskItem>
        <TaskItem $w={46}>
          <svg width="36" height="36" viewBox="0 0 36 36">
            <path d="M1 1h5v4h26v26H4v4H1z" fill="#d0d0d0" />
            <rect x="8" y="8" width="20" height="18" fill="#222" />
            <text x="18" y="23" textAnchor="middle" fontSize="17" fontWeight="700" fill="#eee" fontFamily="Liberation Sans">zz</text>
          </svg>
        </TaskItem>
        <Workspace><BraveBlue /></Workspace>
        <WorkspaceRest />
      </BottomPanel>
    </Screen>
  )
}

export default App
